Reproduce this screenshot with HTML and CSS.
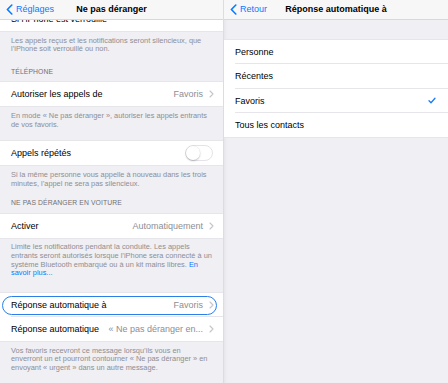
FILE: index.html
```html
<!DOCTYPE html>
<html lang="fr">
<head>
<meta charset="utf-8">
<title>Ne pas déranger</title>
<link rel="stylesheet" href="styles.css">
</head>
<body>
<div class="screen">
  <section class="panel panel-left">
    <header class="nav">
      <a class="back">
        <svg class="back-chev" width="7" height="11" viewBox="0 0 7 11"><path d="M5.8 1 L1.4 5.5 L5.8 10" fill="none" stroke="#0a7aff" stroke-width="1.6" stroke-linecap="round" stroke-linejoin="round"/></svg>
        <span>Réglages</span>
      </a>
      <h1 class="title">Ne pas déranger</h1>
      <span class="nav-spacer"></span>
    </header>
    <div class="content">
      <div class="group group-cut">
        <div class="row"><span class="label">Si l’iPhone est verrouillé</span></div>
      </div>
      <p class="footer">Les appels reçus et les notifications seront silencieux, que<br>l’iPhone soit verrouillé ou non.</p>

      <p class="header">TÉLÉPHONE</p>
      <div class="group">
        <div class="row">
          <span class="label">Autoriser les appels de</span>
          <span class="value">Favoris</span>
          <svg class="chev" width="5" height="8" viewBox="0 0 5 8"><path d="M1 1 L4 4 L1 7" fill="none" stroke="#c4c4c9" stroke-width="1.1" stroke-linecap="round" stroke-linejoin="round"/></svg>
        </div>
      </div>
      <p class="footer">En mode « Ne pas déranger », autoriser les appels entrants<br>de vos favoris.</p>

      <div class="group group-spaced">
        <div class="row row-toggle">
          <span class="label">Appels répétés</span>
          <span class="toggle"><span class="knob"></span></span>
        </div>
      </div>
      <p class="footer">Si la même personne vous appelle à nouveau dans les trois<br>minutes, l’appel ne sera pas silencieux.</p>

      <p class="header header-tight">NE PAS DÉRANGER EN VOITURE</p>
      <div class="group">
        <div class="row">
          <span class="label">Activer</span>
          <span class="value">Automatiquement</span>
          <svg class="chev" width="5" height="8" viewBox="0 0 5 8"><path d="M1 1 L4 4 L1 7" fill="none" stroke="#c4c4c9" stroke-width="1.1" stroke-linecap="round" stroke-linejoin="round"/></svg>
        </div>
      </div>
      <p class="footer">Limite les notifications pendant la conduite. Les appels<br>entrants seront autorisés lorsque l’iPhone sera connecté à un<br>système Bluetooth embarqué ou à un kit mains libres. <span class="link">En<br>savoir plus...</span></p>

      <div class="group group-spaced-lg">
        <div class="row row-highlight">
          <span class="label">Réponse automatique à</span>
          <span class="value">Favoris</span>
          <svg class="chev" width="5" height="8" viewBox="0 0 5 8"><path d="M1 1 L4 4 L1 7" fill="none" stroke="#c4c4c9" stroke-width="1.1" stroke-linecap="round" stroke-linejoin="round"/></svg>
        </div>
        <div class="row row-sep">
          <span class="label">Réponse automatique</span>
          <span class="value value-long">« Ne pas déranger en...</span>
          <svg class="chev" width="5" height="8" viewBox="0 0 5 8"><path d="M1 1 L4 4 L1 7" fill="none" stroke="#c4c4c9" stroke-width="1.1" stroke-linecap="round" stroke-linejoin="round"/></svg>
        </div>
      </div>
      <p class="footer">Vos favoris recevront ce message lorsqu’ils vous en<br>enverront un et pourront contourner « Ne pas déranger » en<br>envoyant « urgent » dans un autre message.</p>
    </div>
  </section>

  <div class="divider"></div>

  <section class="panel panel-right">
    <header class="nav">
      <a class="back">
        <svg class="back-chev" width="7" height="11" viewBox="0 0 7 11"><path d="M5.8 1 L1.4 5.5 L5.8 10" fill="none" stroke="#0a7aff" stroke-width="1.6" stroke-linecap="round" stroke-linejoin="round"/></svg>
        <span>Retour</span>
      </a>
      <h1 class="title">Réponse automatique à</h1>
      <span class="nav-spacer"></span>
    </header>
    <div class="content">
      <div class="group group-list">
        <div class="row"><span class="label">Personne</span></div>
        <div class="row row-sep"><span class="label">Récentes</span></div>
        <div class="row row-sep">
          <span class="label">Favoris</span>
          <svg class="check" width="8" height="7" viewBox="0 0 8 7"><path d="M1 3.8 L3 5.8 L7 1.2" fill="none" stroke="#1c7cf4" stroke-width="1.3" stroke-linecap="round" stroke-linejoin="round"/></svg>
        </div>
        <div class="row row-sep"><span class="label">Tous les contacts</span></div>
      </div>
    </div>
  </section>
</div>
</body>
</html>
```

FILE: styles.css
```css
* { box-sizing: border-box; }

html, body {
  margin: 0;
  padding: 0;
  width: 448px;
  height: 383px;
  overflow: hidden;
  background: #efeff4;
  font-family: "Liberation Sans", Arial, sans-serif;
  -webkit-font-smoothing: antialiased;
}

.screen {
  display: flex;
  width: 448px;
  height: 383px;
}

.panel {
  display: flex;
  flex-direction: column;
  background: #efeff4;
  height: 383px;
  overflow: hidden;
}

.panel-left { width: 223px; }
.panel-right { flex: 1; box-shadow: inset 3px 0 4px -3px rgba(0,0,0,0.08); }

.divider {
  width: 1px;
  background: #dcdce1;
}

.nav {
  flex: none;
  height: 20px;
  display: grid;
  grid-template-columns: 1fr auto 1fr;
  align-items: center;
  background: #f7f7f8;
  border-bottom: 1px solid #d8d8dc;
  position: relative;
  z-index: 2;
}

.back {
  display: flex;
  align-items: center;
  gap: 3px;
  padding-left: 6px;
  color: #0a7aff;
  font-size: 9px;
  line-height: 11px;
}

.back-chev { flex: none; }

.title {
  margin: 0;
  font-size: 9px;
  line-height: 11px;
  font-weight: bold;
  color: #000;
  white-space: nowrap;
}

.content {
  flex: 1;
  overflow: hidden;
}

.group {
  background: #fff;
  border-top: 1px solid #e6e6ea;
  border-bottom: 1px solid #e6e6ea;
}

.group-cut {
  margin-top: -13px;
  border-top: none;
}

.group-spaced { margin-top: 11px; }
.group-spaced-lg { margin-top: 14px; }
.group-list { margin-top: 19px; }

.row {
  position: relative;
  display: flex;
  align-items: center;
  height: 24px;
  padding: 0 9px 0 11px;
  font-size: 9px;
  color: #000;
  white-space: nowrap;
}

.row-sep::before {
  content: "";
  position: absolute;
  left: 11px;
  right: 0;
  top: -1px;
  height: 1px;
  background: #e6e6ea;
}

.group-list .row { height: 24.3px; }

.label { flex: none; }

.value {
  margin-left: auto;
  color: #8e8e93;
}

.chev {
  flex: none;
  margin-left: 6px;
}

.check {
  margin-left: auto;
  margin-right: 3px;
}

.row-toggle { padding-right: 10px; }

.toggle {
  margin-left: auto;
  position: relative;
  width: 28px;
  height: 16px;
  border-radius: 8px;
  background: #fff;
  border: 1px solid #e4e4e8;
}

.knob {
  position: absolute;
  left: 0;
  top: 0;
  width: 14px;
  height: 14px;
  border-radius: 50%;
  background: #fff;
  box-shadow: 0 1px 2px rgba(0,0,0,0.22), 0 0 0 0.5px rgba(0,0,0,0.06);
}

.row-highlight::after {
  content: "";
  position: absolute;
  left: 2px;
  right: 6px;
  top: 3px;
  bottom: 2px;
  border: 1.5px solid #2b80e8;
  border-radius: 10px;
  pointer-events: none;
}

.footer {
  margin: 0;
  padding: 4.5px 11px 0;
  font-size: 7.4px;
  line-height: 8.7px;
  color: #8e8e93;
  white-space: nowrap;
}

.link { color: #0a7aff; }

.header {
  margin: 0;
  padding: 14px 11px 5.5px;
  font-size: 6.8px;
  line-height: 8px;
  color: #707075;
  letter-spacing: 0.1px;
  white-space: nowrap;
}

.header-tight { padding-top: 11px; }
```
